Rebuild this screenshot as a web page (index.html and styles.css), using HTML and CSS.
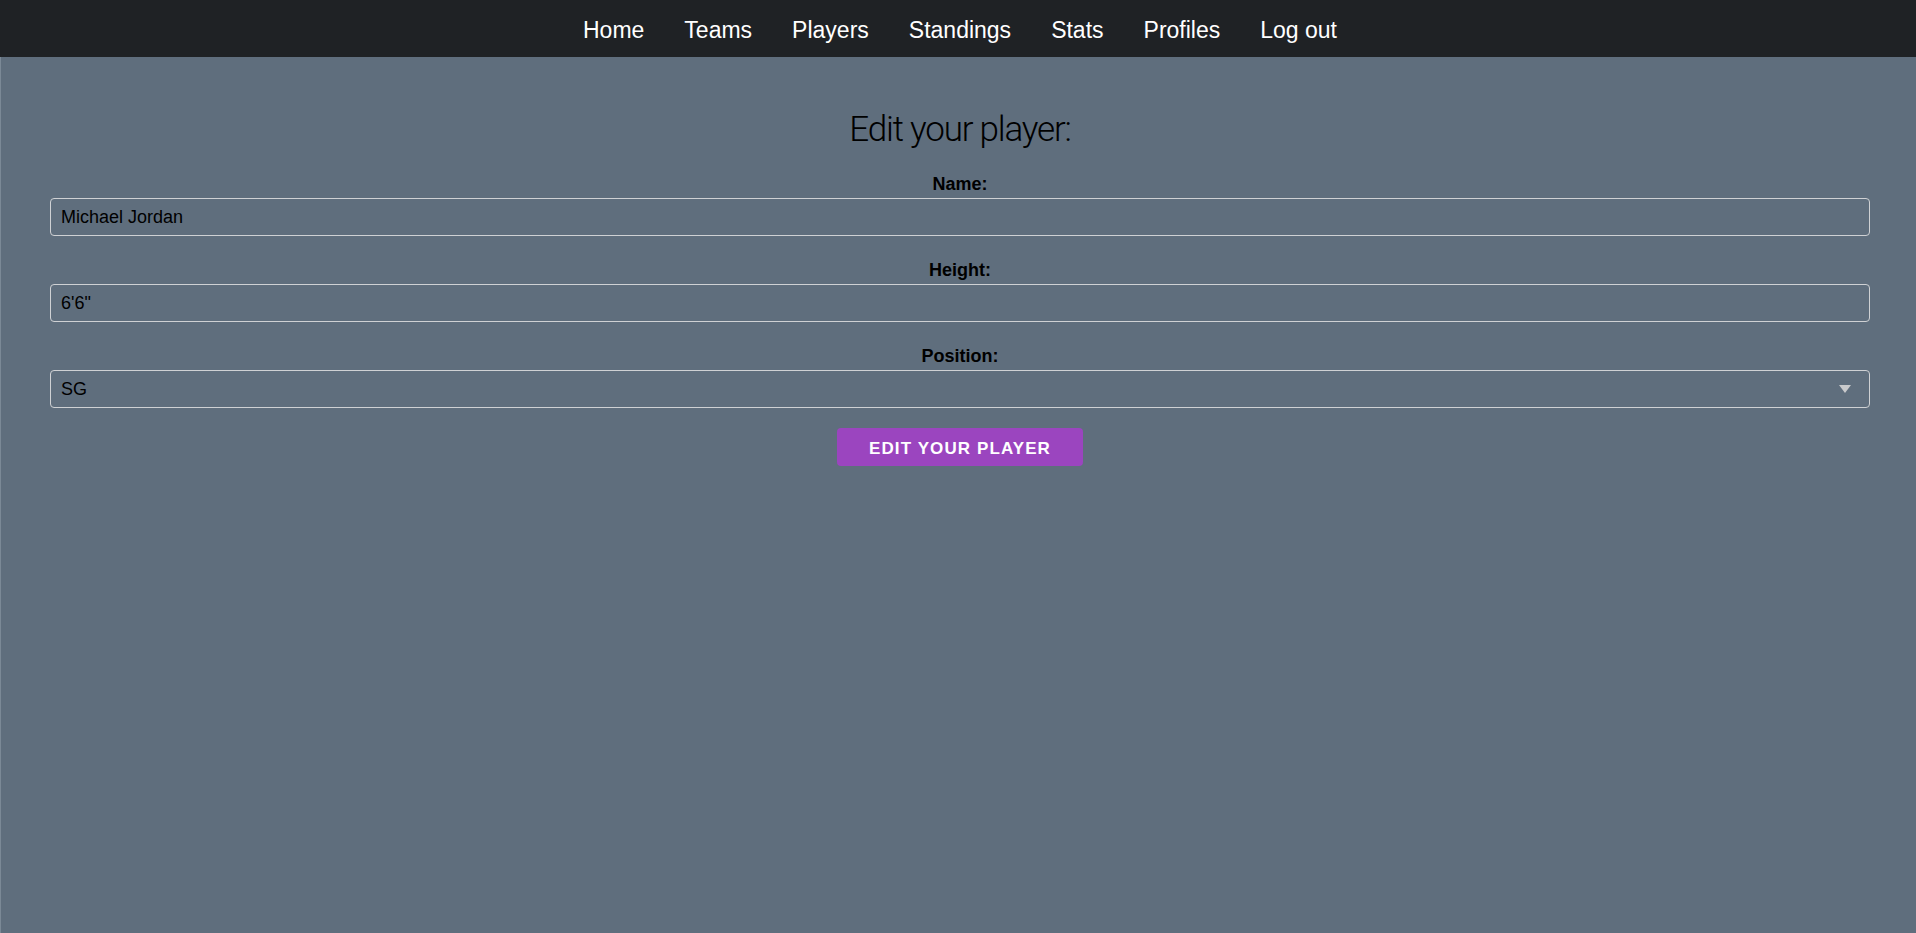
FILE: index.html
```html
<!DOCTYPE html>
<html lang="en">
<head>
<meta charset="utf-8">
<title>Edit your player</title>
<link rel="stylesheet" href="styles.css">
</head>
<body>
<nav class="topnav">
  <ul class="nav-list">
    <li><a class="nav-link" href="#">Home</a></li>
    <li><a class="nav-link" href="#">Teams</a></li>
    <li><a class="nav-link" href="#">Players</a></li>
    <li><a class="nav-link" href="#">Standings</a></li>
    <li><a class="nav-link" href="#">Stats</a></li>
    <li><a class="nav-link" href="#">Profiles</a></li>
    <li><a class="nav-link" href="#">Log out</a></li>
  </ul>
</nav>
<main class="page">
  <h1 class="title">Edit your player:</h1>
  <form class="player-form">
    <div class="field">
      <label class="field-label" for="name">Name:</label>
      <input class="field-input" id="name" type="text" value="Michael Jordan">
    </div>
    <div class="field">
      <label class="field-label" for="height">Height:</label>
      <input class="field-input" id="height" type="text" value="6'6&quot;">
    </div>
    <div class="field">
      <label class="field-label" for="position">Position:</label>
      <div class="select-wrap">
        <select class="field-input field-select" id="position">
          <option>PG</option>
          <option selected>SG</option>
          <option>SF</option>
          <option>PF</option>
          <option>C</option>
        </select>
        <svg class="select-arrow" width="12" height="8" viewBox="0 0 12 8" aria-hidden="true"><path d="M0 0 H12 L6 8 Z" fill="#c9cacc"/></svg>
      </div>
    </div>
    <div class="actions">
      <button class="submit-btn" type="button">Edit your player</button>
    </div>
  </form>
</main>
</body>
</html>
```

FILE: styles.css
```css
* { box-sizing: border-box; }

html, body {
  margin: 0;
  padding: 0;
  height: 100%;
}

body {
  background: #5f6e7d;
  font-family: "Liberation Sans", Arial, sans-serif;
  color: #000;
  display: flex;
  flex-direction: column;
  min-height: 100%;
}

.topnav {
  background: #1f2225;
  height: 57px;
  flex: 0 0 auto;
  display: flex;
  align-items: center;
  justify-content: center;
  padding: 2px 0 0 4px;
}

.nav-list {
  list-style: none;
  margin: 0;
  padding: 0;
  display: flex;
  gap: 40px;
}

.nav-link {
  color: #fff;
  text-decoration: none;
  font-size: 23px;
  line-height: 28px;
  display: block;
}

.page {
  flex: 1 1 auto;
  border-left: 1px solid #7b8996;
  padding: 51px 46px 0 49px;
}

.title {
  margin: 0 0 21px;
  text-align: center;
  font-family: Roboto, "Liberation Sans", sans-serif;
  font-weight: 300;
  font-size: 35px;
  line-height: 44px;
  letter-spacing: -1.2px;
}

.player-form {
  display: flex;
  flex-direction: column;
}

.field {
  display: flex;
  flex-direction: column;
  margin-bottom: 23px;
}

.field-label {
  display: block;
  text-align: center;
  font-weight: 700;
  font-size: 18px;
  line-height: 22px;
  margin-bottom: 3px;
}

.field-input {
  width: 100%;
  height: 38px;
  border: 1px solid #cfd1d4;
  border-radius: 4px;
  background: transparent;
  color: #000;
  font-family: "Liberation Sans", Arial, sans-serif;
  font-size: 18px;
  padding: 0 10px;
  outline: none;
}

.select-wrap {
  position: relative;
}

.field-select {
  appearance: none;
  -webkit-appearance: none;
  cursor: pointer;
}

.select-arrow {
  position: absolute;
  right: 19px;
  top: 15px;
  pointer-events: none;
}

.actions {
  display: flex;
  justify-content: center;
  margin-top: -3px;
}

.submit-btn {
  background: #9b45bf;
  color: #fff;
  border: none;
  border-radius: 4px;
  height: 38px;
  padding: 3px 32px 0;
  font-family: "Liberation Sans", Arial, sans-serif;
  font-weight: 700;
  font-size: 17px;
  letter-spacing: 1.1px;
  text-transform: uppercase;
  cursor: pointer;
}
```
